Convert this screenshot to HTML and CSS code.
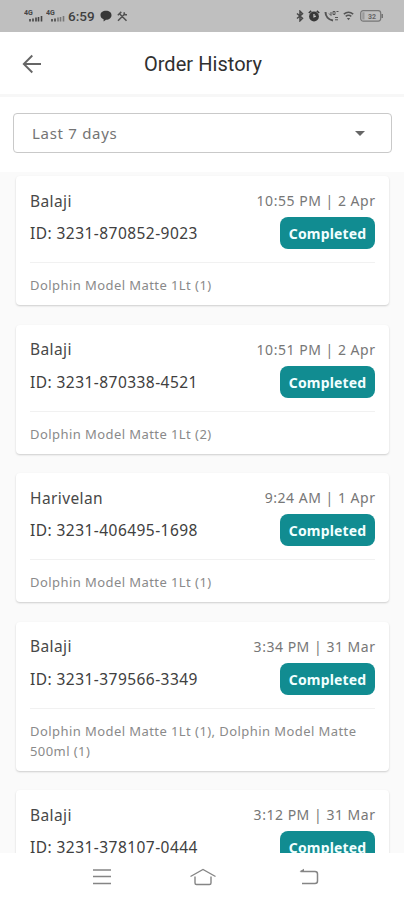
FILE: index.html
```html
<!DOCTYPE html>
<html lang="en">
<head>
<meta charset="utf-8">
<title>Order History</title>
<link rel="stylesheet" href="styles.css">
</head>
<body>
<div class="screen">
  <div class="status">
    <div class="status-left">
      <svg width="19" height="14" viewBox="0 0 19 14"><text class="net" x="0" y="6">4G</text><path d="M6 10v2.5M9 9.5v3M12 8.500v4M14.500 8v4.500M17.500 7v5.500" stroke="#444" stroke-width="1.600"/></svg>
      <svg width="19" height="14" viewBox="0 0 19 14"><text class="net" x="0" y="6">4G</text><path d="M6 10v2.5M9 9.500v3" stroke="#444" stroke-width="1.600"/><path d="M12 8.500v4M14.500 8v4.500M17.500 7v5.500" stroke="#777" stroke-width="1.600"/></svg>
      <span class="clock">6:59</span>
      <svg class="chat" width="12" height="12" viewBox="0 0 12 12"><path d="M6 .8C9.300.8 11.500 2.600 11.500 5.200S9.300 9.800 6 9.800L3.600 11.500V9.200C1.600 8.400.5 7 .5 5.200.5 2.600 2.700.8 6 .8Z" fill="#383838"/></svg>
      <svg class="tools" width="11" height="11" viewBox="0 0 11 11" fill="none" stroke="#505050" stroke-width="1.500"><path d="M1 9.800 8.200 2.500M3 3.200l6.500 6.500M.8 4.200 4.300.9M7.200 1.200v2.500h2.800"/></svg>
    </div>
    <div class="status-right">
      <svg width="8" height="12" viewBox="0 0 8 12" fill="none" stroke="#484848" stroke-width="1.500"><path d="M1 3.500 6.500 8.300 4 10.800V1.200L6.500 3.700 1 8.500"/></svg>
      <svg width="12" height="12" viewBox="0 0 12 12"><path d="M.8 3 3.200.9M11.200 3 8.800.9" stroke="#383838" stroke-width="1.600"/><circle cx="6" cy="6.500" r="4.900" fill="#383838"/><path d="M6 4v2.800l2-.8" fill="none" stroke="#c8c8c8" stroke-width="1.200"/></svg>
      <svg width="15" height="12" viewBox="0 0 15 12" fill="none" stroke="#555"><path d="M1.500 2C1.500 6.500 4.500 9.800 9 10.500" stroke-width="2"/><path d="M5 3.500 7 5.500V2M9 1.500h2v3H9zM12.500 1.500h2M11 7.500h3M11 9.800h3" stroke-width="1"/></svg>
      <svg width="11" height="12" viewBox="0 0 11 12" fill="none" stroke="#555" stroke-width="1.500"><path d="M.8 4.200C3.600 1.900 7.400 1.900 10.200 4.200M2.700 6.400c1.700-1.300 3.900-1.300 5.600 0"/><path d="M3.800 8 5.500 10.300 7.200 8Z" fill="#555" stroke="none"/></svg>
      <svg class="battery" width="23" height="12" viewBox="0 0 23 12"><rect x=".7" y=".7" width="20" height="10.400" rx="2.500" fill="none" stroke="#777" stroke-width="1.200"/><path d="M2.300 2.300h2.200v7.200H2.300z" fill="#999"/><path d="M22.200 4v4" stroke="#666" stroke-width="1.300"/><text class="pct" x="8" y="8.500">32</text></svg>
    </div>
  </div>
  <header class="header">
    <svg class="back" width="20" height="20" viewBox="0 0 20 20" fill="none" stroke="#666" stroke-width="1.900"><path d="M19 10H2M10.300 1.500 1.800 10l8.500 8.500"/></svg>
    <h1 class="title">Order History</h1>
  </header>
  <div class="filter">
    <div class="select"><span>Last 7 days</span><i class="caret"></i></div>
  </div>
  <main class="list">
    <article class="card">
      <div class="row top"><span class="name">Balaji</span><span class="time">10:55 PM | 2 Apr</span></div>
      <div class="row"><span class="id">ID: 3231-870852-9023</span><span class="badge">Completed</span></div>
      <p class="items">Dolphin Model Matte 1Lt (1)</p>
    </article>
    <article class="card">
      <div class="row top"><span class="name">Balaji</span><span class="time">10:51 PM | 2 Apr</span></div>
      <div class="row"><span class="id">ID: 3231-870338-4521</span><span class="badge">Completed</span></div>
      <p class="items">Dolphin Model Matte 1Lt (2)</p>
    </article>
    <article class="card">
      <div class="row top"><span class="name">Harivelan</span><span class="time">9:24 AM | 1 Apr</span></div>
      <div class="row"><span class="id">ID: 3231-406495-1698</span><span class="badge">Completed</span></div>
      <p class="items">Dolphin Model Matte 1Lt (1)</p>
    </article>
    <article class="card">
      <div class="row top"><span class="name">Balaji</span><span class="time">3:34 PM | 31 Mar</span></div>
      <div class="row"><span class="id">ID: 3231-379566-3349</span><span class="badge">Completed</span></div>
      <p class="items">Dolphin Model Matte 1Lt (1), Dolphin Model Matte<br>500ml (1)</p>
    </article>
    <article class="card">
      <div class="row top"><span class="name">Balaji</span><span class="time">3:12 PM | 31 Mar</span></div>
      <div class="row"><span class="id">ID: 3231-378107-0444</span><span class="badge">Completed</span></div>
    </article>
  </main>
  <nav class="nav">
    <svg width="20" height="18" viewBox="0 0 20 18" fill="none" stroke="#858585" stroke-width="1.500"><path d="M1 2h18M1 8.500h18M1 15.500h18"/></svg>
    <svg width="28" height="18" viewBox="0 0 28 18" fill="none" stroke="#858585" stroke-width="1.400"><path d="M1.500 8.500 14 1.500l12.500 7M6 8.500V15q0 1.500 1.500 1.500h13Q22 16.500 22 15V8.500"/></svg>
    <svg width="20" height="18" viewBox="0 0 20 18" fill="none" stroke="#858585" stroke-width="1.500"><path d="M1.500 3.500H16Q18.500 3.500 18.500 6v7Q18.500 15.500 16 15.500H3"/><path d="M.5 3.500 5 .8V3.500Z" fill="#858585" stroke="none"/></svg>
  </nav>
</div>
</body>
</html>
```
FILE: styles.css
```css
* { box-sizing: border-box; }
body { margin: 0; font-family: "Noto Sans", sans-serif; background: #fff; }
svg { display: block; flex: none; }
.screen { width: 404px; height: 900px; display: flex; flex-direction: column; overflow: hidden; }
.status { height: 32px; flex: none; background: #bfbfbf; display: flex; justify-content: space-between; padding: 0 21px 0 24px; }
.status-left, .status-right { display: flex; align-items: center; }
.status-left { gap: 3px; }
.status-right { gap: 4px; }
.net { font: bold 7px Roboto, sans-serif; fill: #444; }
.pct { font: bold 7px Roboto, sans-serif; fill: #666; }
.clock { font: 500 13.500px/32px Roboto, sans-serif; color: #404040; }
.chat { margin-left: 2px; }
.tools { margin-left: 2px; }
.battery { margin-left: 2px; }
.header { height: 65px; flex: none; display: grid; grid-template-columns: 64px 1fr 62px; align-items: center; border-bottom: 3px solid #f7f7f7; }
.back { margin: 1px 0 0 22px; }
.title { margin: 1px 0 0; text-align: center; font: 400 20px/28px Roboto, sans-serif; color: #303030; letter-spacing: .05px; }
.filter { height: 75px; flex: none; padding: 16px 12px 0 13px; }
.select { height: 40px; border: 1.500px solid #c9c9c9; border-radius: 4px; display: flex; align-items: center; justify-content: space-between; padding: 0 26px 0 18px; font-size: 15px; color: #747474; letter-spacing: .7px; }
.caret { border: 5.500px solid transparent; border-top-color: #666; border-bottom: 0; }
.list { flex: 1; min-height: 0; overflow: hidden; background: #fafafa; padding: 4px 15px 0 16px; display: flex; flex-direction: column; gap: 19.500px; }
.card { flex: none; background: #fff; border-radius: 4px; box-shadow: 0 1px 2px rgba(0,0,0,.18); padding: 9px 14px 10px; }
.row { display: flex; align-items: center; justify-content: space-between; height: 33px; }
.top { height: 32px; }
.name, .id { margin-top: -1px; }
.name { font-size: 15.500px; color: #484848; letter-spacing: .4px; }
.time { font-size: 14px; color: #777; letter-spacing: .520px; margin: -1px -.5px 0 0; }
.id { font-size: 15.500px; color: #404040; letter-spacing: .450px; }
.badge { width: 95px; height: 32px; margin-top: -1px; border-radius: 8px; background: #118c91; color: #f2ffff; font-size: 14px; line-height: 33px; font-weight: 700; text-align: center; letter-spacing: .15px; }
.items { margin: 12px 0 0; border-top: 1px solid #f1f1f1; padding-top: 12px; font-size: 13px; line-height: 20px; color: #8a8a8a; letter-spacing: .430px; white-space: nowrap; }
.nav { height: 47px; flex: none; background: #fff; display: flex; align-items: center; padding-left: 92px; gap: 77px; }
.nav svg:last-child { margin-left: 5px; }
```
